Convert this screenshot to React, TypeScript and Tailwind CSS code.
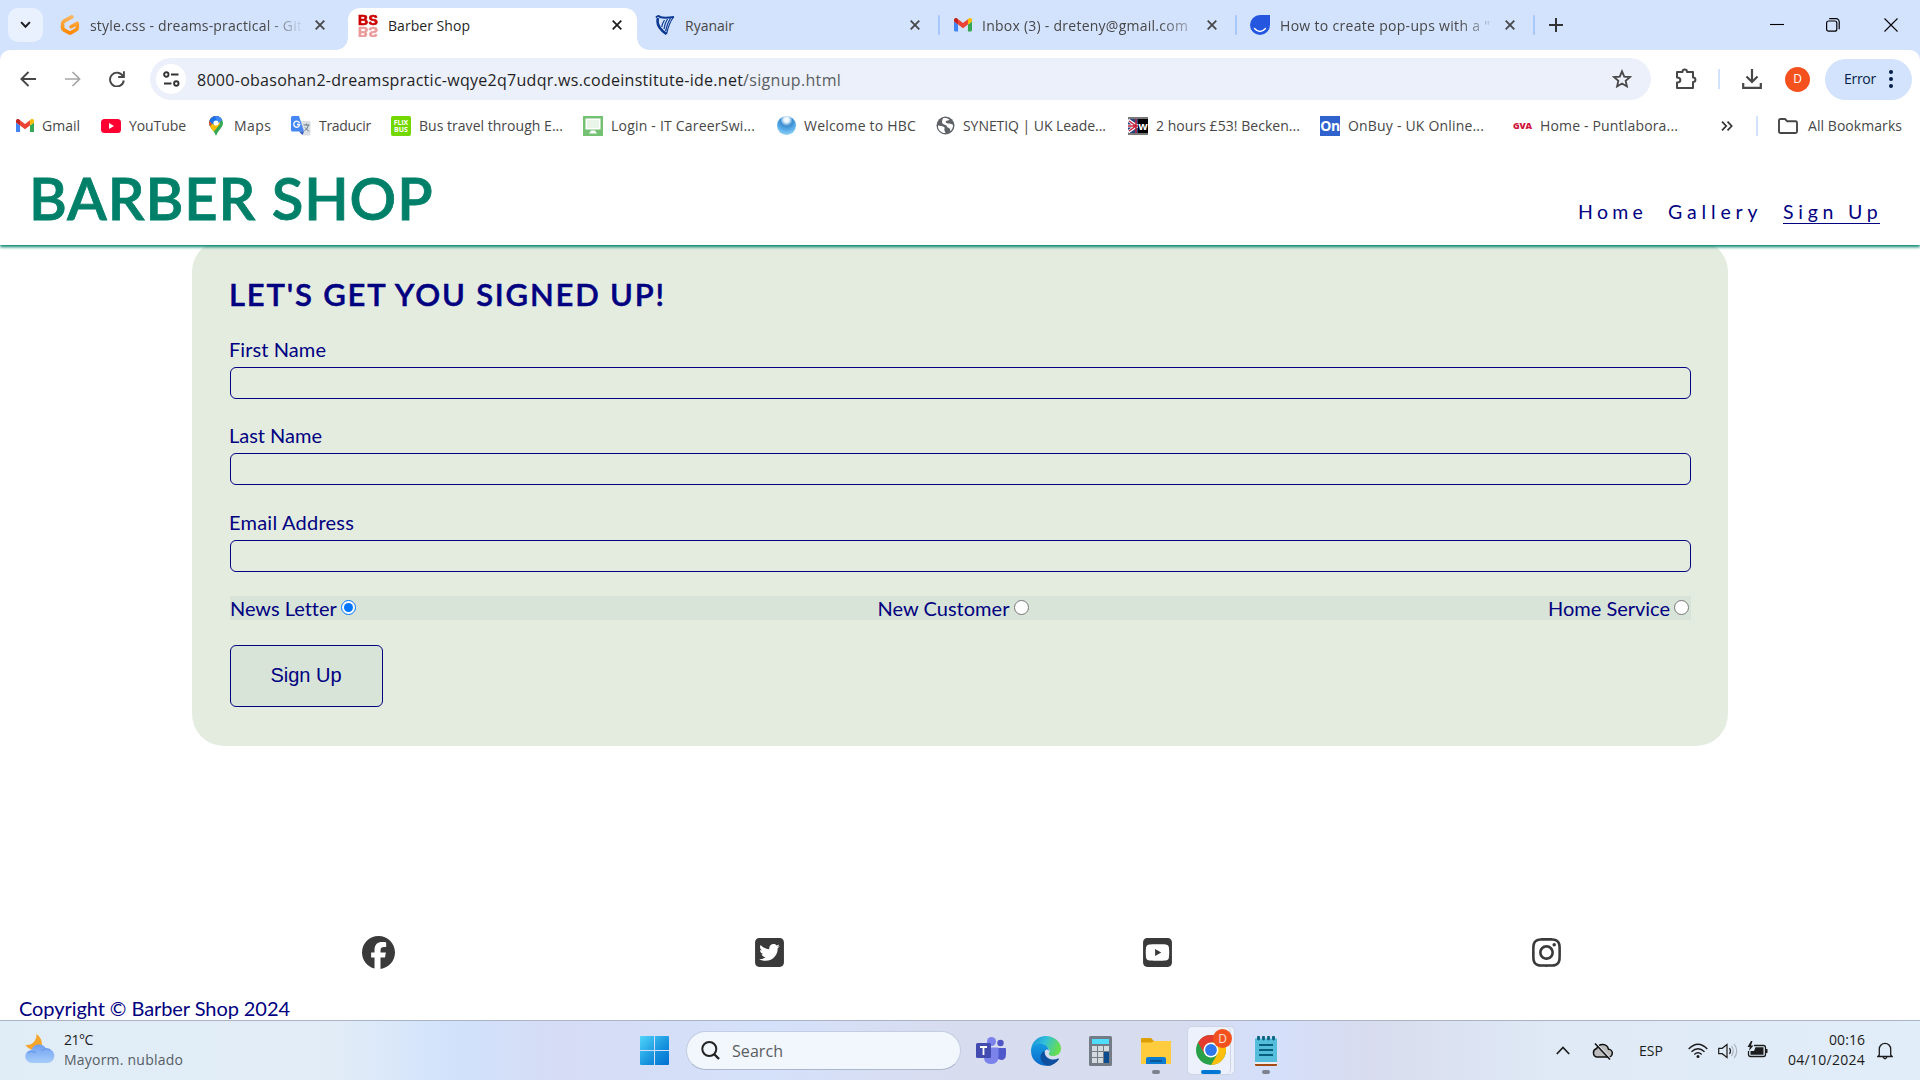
import { useLayoutEffect, useRef, useState, type ReactNode } from 'react';
import { FaFacebook, FaInstagram, FaSquareTwitter, FaSquareYoutube } from 'react-icons/fa6';

/** Single line of text whose tracking is adjusted so that it spans `w` pixels. */
function Fit({ w, className = '', children }: { w: number; className?: string; children: string }) {
  const ref = useRef<HTMLSpanElement>(null);
  const [spacing, setSpacing] = useState(0);
  useLayoutEffect(() => {
    if (ref.current) {
      const natural = ref.current.getBoundingClientRect().width - spacing * children.length;
      setSpacing((w - natural) / (children.length - 0.5));
    }
  }, [w, children]);
  return (
    <span className={`block shrink-0 whitespace-pre ${className}`} style={{ width: w }}>
      <span ref={ref} className="inline-block" style={{ letterSpacing: spacing }}>
        {children}
      </span>
    </span>
  );
}

function CloseX({ className = '' }: { className?: string }) {
  return (
    <svg viewBox="0 0 10 10" className={`size-[10px] shrink-0 ${className}`} stroke="currentColor" strokeWidth="1.8" fill="none">
      <path d="M.7.7l8.6 8.6M9.3.7L.7 9.3" />
    </svg>
  );
}

function GmailIcon({ className = '' }: { className?: string }) {
  return (
    <svg viewBox="0 0 24 18" className={`shrink-0 ${className}`}>
      <path fill="#4285f4" d="M1.6 18h3.8V8.7L0 4.6v11.8C0 17.3.7 18 1.6 18z" />
      <path fill="#34a853" d="M18.6 18h3.8c.9 0 1.6-.7 1.6-1.6V4.6l-5.4 4.1z" />
      <path fill="#fbbc04" d="M18.6 1.6v7.1L24 4.6V2.4c0-2-2.3-3.2-3.9-2z" />
      <path fill="#ea4335" d="M5.4 8.7V1.6L12 6.6l6.6-5v7.1L12 13.7z" />
      <path fill="#c5221f" d="M0 2.4v2.2l5.4 4.1V1.6L3.9.4C2.300-.8 0 .4 0 2.4z" />
    </svg>
  );
}

function GitpodIcon() {
  return (
    <svg viewBox="0 0 20 20" className="size-5 shrink-0">
      <defs>
        <linearGradient id="gp" x1="0" y1="0" x2="0" y2="1">
          <stop offset="0" stopColor="#ffb45b" />
          <stop offset="1" stopColor="#ff8a00" />
        </linearGradient>
      </defs>
      <path d="M11.800 1.900L4.500 5.900Q2.600 7 2.600 8.700v3.900q0 1.500 1.300 2.200l5 2.800q1.100.6 2.200 0l5-2.800q1.200-.7 1.200-2V8.200l-6.300 3.500" fill="none" stroke="url(#gp)" strokeWidth="3.600" strokeLinecap="round" strokeLinejoin="round" />
    </svg>
  );
}

function BarberIcon() {
  return (
    <span className="block h-[22px] w-[21px] shrink-0 pt-px font-['Liberation_Sans'] text-[#cc0000]">
      <span className="block h-[11px] w-[21px] text-[14px] font-bold leading-[11px] tracking-[.3px] [-webkit-box-reflect:below_0px_linear-gradient(rgba(0,0,0,.4),rgba(0,0,0,.4))] [-webkit-text-stroke:.7px_#cc0000]">BS</span>
    </span>
  );
}

function RyanairIcon() {
  return (
    <svg viewBox="0 0 20 20" className="size-5 shrink-0" fill="none" stroke="#0c3a93">
      <path d="M1 2.500q2-2.500 4-.5 4 1.500 14 0" strokeWidth="2" />
      <path d="M3 3Q.5 12 11.500 19" strokeWidth="2.600" />
      <path d="M18.500 2Q14 8 11.500 19M15.500 3Q12 9 10.500 16M12.500 4Q9.500 9 9 14M9.500 5Q7 9 6.800 12" strokeWidth="1.200" />
    </svg>
  );
}

function Separator({ className = '' }: { className?: string }) {
  return <div className={`h-5 w-[2px] shrink-0 rounded bg-[#a8c7fa] ${className}`} />;
}

function TabStrip() {
  return (
    <div className="flex h-[50px] items-center bg-[#d3e2fd] text-[14px] text-[#474747]">
      <div className="ml-2 grid h-[34px] w-[35px] shrink-0 place-items-center rounded-[10px] bg-[#e9f0fe] text-[#1f1f1f]">
        <svg viewBox="0 0 12 8" className="w-[11px]" fill="none" stroke="currentColor" strokeWidth="2.200"><path d="M1.200 1.200L6 6.200l4.800-5" /></svg>
      </div>
      <div className="ml-[17px] flex w-[288px] shrink-0 items-center">
        <GitpodIcon />
        <div className="ml-[10px] w-[212px] overflow-hidden [mask-image:linear-gradient(90deg,#000_83%,transparent_101%)]"><Fit w={212}>style.css - dreams-practical - Git</Fit></div>
        <CloseX className="ml-[13px]" />
      </div>
      <div className="relative flex h-[42px] w-[289px] shrink-0 items-center self-end rounded-t-[12px] bg-white pl-[10px] pb-[8px] text-[#1f1f1f] before:absolute before:-left-3 before:bottom-0 before:size-3 before:bg-[radial-gradient(circle_at_0_0,transparent_11.500px,white_12px)] after:absolute after:-right-3 after:bottom-0 after:size-3 after:bg-[radial-gradient(circle_at_100%_0,transparent_11.500px,white_12px)]">
        <BarberIcon />
        <Fit w={82} className="ml-[9px]">Barber Shop</Fit>
        <CloseX className="ml-[142px]" />
      </div>
      <div className="ml-[18px] flex w-[283px] shrink-0 items-center">
        <RyanairIcon />
        <Fit w={49} className="ml-[10px]">Ryanair</Fit>
        <CloseX className="ml-[176px]" />
        <Separator className="ml-[18px]" />
      </div>
      <div className="ml-[16px] flex w-[283px] shrink-0 items-center">
        <GmailIcon className="w-[18px]" />
        <div className="ml-[10px] w-[206px] overflow-hidden [mask-image:linear-gradient(90deg,#000_86%,transparent_108%)]"><Fit w={206}>Inbox (3) - dreteny@gmail.com</Fit></div>
        <CloseX className="ml-[19px]" />
        <Separator className="ml-[18px]" />
      </div>
      <div className="ml-[13px] flex w-[285px] shrink-0 items-center">
        <svg viewBox="0 0 20 20" className="size-5 shrink-0">
          <path d="M10 0h10v10A10 10 0 1 1 10 0z" fill="#2456df" />
          <path d="M4.500 13.500q5.500 6 11 0" fill="none" stroke="#fff" strokeWidth="1.400" strokeLinecap="round" />
        </svg>
        <div className="ml-[10px] w-[210px] overflow-hidden [mask-image:linear-gradient(90deg,#000_85%,transparent_104%)]"><Fit w={210}>How to create pop-ups with a "</Fit></div>
        <CloseX className="ml-[15px]" />
        <Separator className="ml-[18px]" />
      </div>
      <svg viewBox="0 0 14 14" className="ml-[14px] size-[14px] shrink-0" stroke="#333" strokeWidth="2"><path d="M7 0v14M0 7h14" /></svg>
      <div className="ml-auto mr-[22px] flex items-center text-black">
        <svg viewBox="0 0 14 14" className="size-[14px]" stroke="currentColor" strokeWidth="1.100"><path d="M0 6.500h14" /></svg>
        <svg viewBox="0 0 14 14" className="ml-[42px] size-[14px]" fill="none" stroke="currentColor" strokeWidth="1.200"><rect x=".6" y="3" width="10.200" height="10.200" rx="2" /><path d="M3.200.7h7a3 3 0 0 1 3 3v7.500" /></svg>
        <svg viewBox="0 0 14 14" className="ml-[44px] size-[14px]" fill="none" stroke="currentColor" strokeWidth="1.100"><path d="M.5.5l13 13M13.500.5l-13 13" /></svg>
      </div>
    </div>
  );
}

function Toolbar() {
  return (
    <div className="bg-[#d3e2fd]">
      <div className="flex h-[58px] items-center rounded-t-[10px] bg-white pl-5 text-[#474747]">
        <svg viewBox="0 0 16 16" className="size-4 shrink-0" fill="none" stroke="currentColor" strokeWidth="1.900"><path d="M16 8H1.500M8.500 1L1.400 8l7.100 7" /></svg>
        <svg viewBox="0 0 16 16" className="ml-[29px] size-4 shrink-0 text-[#a6a6a6]" fill="none" stroke="currentColor" strokeWidth="1.700"><path d="M0 8h14.500M7.500 1l7.100 7-7.100 7" /></svg>
        <svg viewBox="0 0 16 16" className="ml-[28px] size-4 shrink-0" fill="none" stroke="currentColor" strokeWidth="1.900"><path d="M14 5.200A6.900 6.900 0 1 0 14.800 9.500" /><path d="M14.900.3V6H9.200" /></svg>
        <div className="ml-[25px] flex h-[42px] w-[1501px] shrink-0 items-center rounded-full bg-[#ecf0fa] pl-[6px]">
          <div className="grid size-[30px] shrink-0 place-items-center rounded-full bg-white">
            <svg viewBox="0 0 17 16" className="h-4 w-[17px]" fill="none" stroke="#333" strokeWidth="1.900"><circle cx="3.300" cy="3.500" r="2.200" /><path d="M8 3.500h7.500M1 12.500h7.500" /><circle cx="13.300" cy="12.500" r="2.200" /></svg>
          </div>
          <div className="ml-[11px] flex pt-px text-[16px] text-[#1f1f1f]">
            <Fit w={546}>8000-obasohan2-dreamspractic-wqye2q7udqr.ws.codeinstitute-ide.net</Fit>
            <Fit w={98} className="text-[#5a5d61]">/signup.html</Fit>
          </div>
          <svg viewBox="0 0 24 24" className="ml-auto mr-[19px] size-[20px]" fill="none" stroke="currentColor" strokeWidth="2.200"><path d="M12 2.800l2.700 6.300 6.800.6-5.100 4.500 1.500 6.700-5.900-3.500-5.900 3.500 1.500-6.700-5.100-4.500 6.800-.6z" /></svg>
        </div>
        <svg viewBox="0 0 22 22" className="ml-[24px] size-[22px] shrink-0" fill="none" stroke="currentColor" strokeWidth="2"><path d="M2 4h5.500c0-3.200 4.500-3.200 4.500 0h6v5.500c3.200 0 3.200 4.500 0 4.500v6H2v-5.500c4.500 0 4.500-5 0-5z" strokeLinejoin="round" /></svg>
        <div className="ml-[21px] h-5 w-[2px] shrink-0 bg-[#d3e3fd]" />
        <svg viewBox="0 0 20 20" className="ml-[22px] size-[20px] shrink-0" fill="none" stroke="currentColor" strokeWidth="2.200"><path d="M10 0v12.500M4.500 7.500l5.500 5.500 5.500-5.500M1.200 14v4.800h17.600V14" /></svg>
        <div className="ml-[23px] grid size-[25px] shrink-0 place-items-center rounded-full bg-[#f4511e] text-[12px] text-white">D</div>
        <div className="ml-[15px] flex h-[41px] w-[87px] shrink-0 items-center rounded-full bg-[#d3e3fd] pb-px pl-[19px] text-[14px] text-[#041e49]">
          <Fit w={32}>Error</Fit>
          <svg viewBox="0 0 4 18" className="ml-[13px] h-[18px] w-1" fill="currentColor"><circle cx="2" cy="2" r="2" /><circle cx="2" cy="9" r="2" /><circle cx="2" cy="16" r="2" /></svg>
        </div>
      </div>
    </div>
  );
}

function Bookmark({ icon, w, className = '', children }: { icon: ReactNode; w: number; className?: string; children: string }) {
  return (
    <div className={`flex shrink-0 items-center ${className}`}>
      {icon}
      <Fit w={w} className="ml-2">{children}</Fit>
    </div>
  );
}

function BookmarksBar() {
  return (
    <div className="flex h-[42px] shrink-0 items-center bg-white pb-[7px] pl-4 text-[14px] text-[#474747]">
      <Bookmark w={38} icon={<GmailIcon className="w-[18px]" />}>Gmail</Bookmark>
      <Bookmark w={57} className="ml-[21px]" icon={<svg viewBox="0 0 20 14" className="h-[14px] w-5"><rect width="20" height="14" rx="3.500" fill="#f03" /><path d="M8 4l5 3-5 3z" fill="#fff" /></svg>}>YouTube</Bookmark>
      <Bookmark w={37} className="ml-[20px]" icon={
        <svg viewBox="0 0 20 20" className="size-5">
          <defs><clipPath id="pin"><path d="M10 0a7 7 0 0 1 7 7c0 4.500-5 7-7 13-2-6-7-8.500-7-13a7 7 0 0 1 7-7z" /></clipPath></defs>
          <g clipPath="url(#pin)"><path fill="#34a853" d="M0 0h20v20H0z" /><path fill="#fbbc04" d="M0 14L14 0v8L5 19z" /><path fill="#ea4335" d="M0 0h9L4 11H0z" /><path fill="#1a73e8" d="M5 0h10v4l-7 5-5-4z" /><path fill="#4285f4" d="M9 0h11l-8 8z" /></g>
          <circle cx="10" cy="7" r="2.600" fill="#fff" />
        </svg>}>Maps</Bookmark>
      <Bookmark w={52} className="ml-[20px]" icon={
        <svg viewBox="0 0 20 20" className="size-5"><path d="M8 5h10.500q1 0 1 1v12.500q0 1-1 1H12z" fill="#dcdfe3" /><path d="M1.500 0H8l5 15.500H1.500q-1.500 0-1.500-1.500V1.500Q0 0 1.500 0z" fill="#4587f4" /><path d="M8 15.500h5L11.500 19z" fill="#3457b8" /><path d="M9.500 7.600A3 3 0 1 0 9.700 9H7" fill="none" stroke="#fff" strokeWidth="1.300" transform="translate(-1 -.5)" /><path d="M12.500 9h6M15.500 7.500V9M17.500 9q-1 4-4 6M14 11.500l4 4" stroke="#607988" fill="none" /></svg>}>Traducir</Bookmark>
      <Bookmark w={144} className="ml-[20px]" icon={
        <span className="flex size-5 flex-col items-center justify-center rounded-[2px] bg-[#73d700] text-[7px] font-bold leading-[7px] text-white"><span>FLiX</span><span>BUS</span></span>}>Bus travel through E...</Bookmark>
      <Bookmark w={144} className="ml-[20px]" icon={
        <svg viewBox="0 0 20 20" className="size-5"><path d="M0 0h20v20H0z" fill="#74c174" /><path d="M2.500 2.500h15v11h-15z" fill="#fff" /><path d="M4 4h12v8H4z" fill="#eaf5ea" /><path d="M8 14.500h4l2 3H6z" fill="#fff" /></svg>}>Login - IT CareerSwi...</Bookmark>
      <Bookmark w={112} className="ml-[22px]" icon={
        <span className="size-[19px] shrink-0 rounded-full bg-[radial-gradient(circle_at_50%_20%,#ffffff_0,#e3f2fd_15%,#3d8ed0_35%,#5db0ea_60%,#b5e3fc_100%)]" />}>Welcome to HBC</Bookmark>
      <Bookmark w={143} className="ml-[20px]" icon={
        <svg viewBox="0 0 19 19" className="size-[19px]"><circle cx="9.500" cy="9.500" r="9" fill="#5f6368" /><path d="M2 9.500c2 .2 4 .5 5.500 1.200 2 .9.500 2.200 1 3.800.2 1 .6 1.800 1.200 2.600C5 17.200 1.500 13.500 2 9.500zM7 2.300c2.500-.7 5 0 6.500 1.200-.8 1.600-2.500.6-3.500 1.600-1 1.200.5 2.400 2.200 2.400 2 0 3.500.5 4.800 1.500.2 2.500-1 5-2.600 6.300-.4-1.500-.2-3.300-2-3.500-1.800-.3-1.200-2.300-2.800-2.800C7.500 8.300 5.600 7.600 6 5.500c.2-1.200.6-2 1-3.200z" fill="#fff" /></svg>}>SYNETIQ | UK Leade...</Bookmark>
      <Bookmark w={144} className="ml-[22px]" icon={
        <span className="flex h-[18px] w-5 shrink-0 border-y-2 border-[#777]">
          <svg viewBox="0 0 10 14" className="h-[14px] w-[10px]"><path d="M0 0h10v14H0z" fill="#28457e" /><path d="M0 1l10 7M0 13l10-7M0 7h10" fill="none" stroke="#fff" strokeWidth="3.200" /><path d="M0 7h10M8 0v14M1 2l7 5M1 12l7-5" fill="none" stroke="#c8203a" strokeWidth="1.500" /></svg>
          <span className="w-[10px] bg-black text-center text-[11px] font-bold leading-[13px] text-white">w</span>
        </span>}>2 hours £53! Becken...</Bookmark>
      <Bookmark w={136} className="ml-[20px]" icon={
        <span className="grid size-5 shrink-0 place-items-center bg-[#2f62cd] text-[14px] font-bold leading-none tracking-tight text-white">On</span>}>OnBuy - UK Online...</Bookmark>
      <Bookmark w={138} className="ml-[29px]" icon={
        <span className="w-[19px] shrink-0 text-[9px] font-extrabold leading-none tracking-tight text-[#d0163c]">GVA</span>}>Home - Puntlabora...</Bookmark>
      <svg viewBox="0 0 12 10" className="ml-[43px] h-[10px] w-3 shrink-0" fill="none" stroke="#333" strokeWidth="1.700"><path d="M1 .7L5.200 5 1 9.300M6.500.7L10.700 5 6.500 9.300" /></svg>
      <div className="ml-[23px] h-5 w-[2px] shrink-0 bg-[#d3e3fd]" />
      <svg viewBox="0 0 20 16" className="ml-[20px] h-4 w-5 shrink-0" fill="none" stroke="currentColor" strokeWidth="1.900"><path d="M1 2.500Q1 1 2.500 1H7l2.200 2.200h8.300Q19 3.200 19 4.700v8.800q0 1.500-1.500 1.500h-15Q1 15 1 13.500z" /></svg>
      <Fit w={94} className="ml-[10px]">All Bookmarks</Fit>
    </div>
  );
}

function Field({ label, w }: { label: string; w: number }) {
  return (
    <label className="mb-[24.250px] flex flex-col gap-[6px]">
      <Fit w={w} className="-ml-px leading-6">{label}</Fit>
      <input type="text" className="h-8 rounded-[6px] border border-[#000080] bg-transparent" />
    </label>
  );
}

function RadioOption({ label, w, checked = false }: { label: string; w: number; checked?: boolean }) {
  return (
    <label className="flex items-center">
      <Fit w={w} className="leading-6">{label}</Fit>
      {checked ? (
        <span className="mb-[1px] ml-[5px] mr-[4px] grid size-[15px] place-items-center rounded-full border-[1.500px] border-[#0075ff] bg-white"><span className="size-[9px] rounded-full bg-[#0075ff]" /></span>
      ) : (
        <span className="mb-[1px] ml-[4px] mr-[2px] size-[15px] rounded-full border border-[#767676] bg-white" />
      )}
    </label>
  );
}

function Website() {
  return (
    <div className="flex h-[870px] flex-col overflow-hidden bg-white font-['Lato',sans-serif] text-[20px] text-[#000080]">
      <header className="relative z-10 flex h-[95px] shrink-0 bg-white shadow-[0_2px_3px_#008069]">
        <h1 className="ml-[29px] mt-[13px] text-[58px] font-semibold leading-[70px] text-[#008069] [-webkit-text-stroke:.8px_#008069]"><Fit w={404}>BARBER SHOP</Fit></h1>
        <nav className="ml-auto mr-[40px] mt-[49px] flex text-[19.500px] leading-[25px]">
          <Fit w={67}>Home</Fit>
          <Fit w={92} className="ml-[23px]">Gallery</Fit>
          <Fit w={97} className="ml-[23px] h-[25px] border-b border-[#000080]">Sign Up</Fit>
        </nav>
      </header>
      <form className="mx-[192px] -mt-[5px] flex h-[506px] flex-col rounded-[32px] bg-[#e4ece0] px-[37px] pt-[34px]">
        <div className="ml-px flex flex-col">
          <h2 className="-ml-px mb-[23px] text-[31px] font-semibold leading-10 [-webkit-text-stroke:.5px_#000080]"><Fit w={436}>LET'S GET YOU SIGNED UP!</Fit></h2>
          <Field label="First Name" w={97} />
          <Field label="Last Name" w={93} />
          <Field label="Email Address" w={125} />
          <div className="flex h-6 items-center justify-between bg-[#d8e4d8]">
            <RadioOption label="News Letter" w={106} checked />
            <RadioOption label="New Customer" w={132} />
            <RadioOption label="Home Service" w={122} />
          </div>
          <button type="button" className="mt-[25px] flex h-[62px] w-[153px] items-center justify-center rounded-[6px] border border-[#000080] bg-[#d8e4d8] pb-[2px] pr-px font-['Liberation_Sans']"><Fit w={71}>Sign Up</Fit></button>
        </div>
      </form>
      <footer className="mt-[190px]">
        <div className="flex h-[34px] items-center pb-px text-[#3a3a3a]">
          <FaFacebook className="ml-[362px] size-[33px]" />
          <FaSquareTwitter className="ml-[358px] size-[33px]" />
          <FaSquareYoutube className="ml-[355px] size-[33px]" />
          <FaInstagram className="ml-[356px] size-[33px]" />
        </div>
        <p className="ml-[19px] mt-[26px] leading-6"><Fit w={271}>Copyright © Barber Shop 2024</Fit></p>
      </footer>
    </div>
  );
}

function Taskbar() {
  return (
    <div className="flex h-[60px] items-center border-t border-[#a9b3c4] bg-[linear-gradient(90deg,#e1edf6_0px,#e1ecf7_340px,#d1e2fb_450px,#d6dcf5_560px,#d5e1fa_770px,#d8dcef_960px,#d7dcef_1180px,#d4dffa_1270px,#d8dcee_1370px,#dfeaf6_1560px,#e1edf8_1920px)] text-[14px] text-[#1c1c1c]">
      <svg viewBox="0 0 30 30" className="mb-[3px] ml-[25px] size-[30px] shrink-0">
        <defs><linearGradient id="cl" x1="0" y1="0" x2="0" y2="1"><stop offset="0" stopColor="#6f9ff0" /><stop offset="1" stopColor="#a6cdfa" /></linearGradient></defs>
        <path d="M11.500 0q6 4 5.500 12l-9 4q-5-1-7.500-5 5 .5 8-2.500t3-8.500z" fill="#f5a52b" />
        <path d="M7 29a6.500 6.500 0 0 1-.5-13 8 8 0 0 1 14.500-1.500A7.300 7.300 0 1 1 23 29z" fill="url(#cl)" />
        <path d="M3 19q3-3 8-.5M16 17q5-4 9-1" fill="none" stroke="#5f8fe6" strokeWidth=".9" />
      </svg>
      <div className="ml-[9px] flex w-[120px] shrink-0 flex-col pb-[2px] leading-5">
        <Fit w={29}>21°C</Fit>
        <Fit w={119} className="text-[#565d66]">Mayorm. nublado</Fit>
      </div>
      <svg viewBox="0 0 29 29" className="ml-[456px] size-[29px] shrink-0">
        <defs><linearGradient id="wn" x1="0" y1="0" x2="1" y2="1"><stop offset="0" stopColor="#4fd5fb" /><stop offset=".6" stopColor="#1690dd" /><stop offset="1" stopColor="#006fcf" /></linearGradient></defs>
        <path d="M1 0h13v14H0V1q0-1 1-1zM15 0h13q1 0 1 1v13H15zM0 15h14v14H1q-1 0-1-1zM15 15h14v13q0 1-1 1H15z" fill="url(#wn)" />
      </svg>
      <div className="ml-[17px] flex h-[39px] w-[275px] shrink-0 items-center rounded-full border border-[#c3cee2] border-b-[#adb7cb] bg-[#f2f6fd] pl-[14px] text-[16px] text-[#5a5d62]">
        <svg viewBox="0 0 19 19" className="size-[19px]" fill="none" stroke="#222" strokeWidth="2"><circle cx="8.300" cy="8" r="7" /><path d="M13 13l5 5" strokeWidth="2.400" /></svg>
        <Fit w={51} className="ml-[12px]">Search</Fit>
      </div>
      <svg viewBox="0 0 30 28" className="ml-[15px] h-7 w-[30px] shrink-0">
        <circle cx="24.500" cy="6" r="3.200" fill="#4f55c4" /><circle cx="15.500" cy="4.500" r="4.500" fill="#7b83eb" />
        <path d="M20 11h9q1 0 1 1v5q0 6-5 6-3 0-5-3z" fill="#5059c9" /><path d="M8 10.500h14.500V19q0 8-7 8t-7.500-6z" fill="#7b83eb" />
        <rect y="6" width="15" height="15" rx="1.500" fill="#444bb0" /><path d="M4 10h7M7.500 10v8" stroke="#fff" strokeWidth="1.800" />
      </svg>
      <svg viewBox="0 0 30 30" className="ml-[25px] size-[30px] shrink-0">
        <defs>
          <linearGradient id="e1" x1="0" y1="0" x2="1" y2=".3"><stop offset="0" stopColor="#168bd5" /><stop offset=".5" stopColor="#32bfdc" /><stop offset="1" stopColor="#66dd52" /></linearGradient>
          <linearGradient id="e2" x1="0" y1="0" x2="0" y2="1"><stop offset="0" stopColor="#159be2" /><stop offset="1" stopColor="#0869c9" /></linearGradient>
        </defs>
        <path d="M0 15C0 6 7 0 15 0s15 6 15 12.500c0 5-4 7.500-8 7.500-3 0-5-1-4-3 2-3-1-6-4-6C8 11 3 12 0 15z" fill="url(#e1)" />
        <path d="M0 15C1 9 7 7 11 8c4 1 7 4 7 7-1-2-3-2-4 0-2 4 1 10 6 14-9 3-20-3-20-14z" fill="url(#e2)" />
        <path d="M13.500 15c-7 3-4 14 4 14.800 4-.3 8-3 10.500-6.600.3-.6-.2-.8-.7-.6-7 3-14-1-13.800-7.600z" fill="#0f4f9f" />
      </svg>
      <svg viewBox="0 0 23 30" className="ml-[28px] h-[30px] w-[23px] shrink-0">
        <rect width="23" height="30" rx="1.500" fill="#727b86" /><path d="M3 3h17v5H3z" fill="#50dcfb" />
        <path d="M3 10h5v5H3zM9 10h5v5H9zM15 10h5v5h-5zM3 16h5v5H3zM9 16h5v5H9zM3 22h5v5H3zM9 22h5v5H9z" fill="#d5dade" /><path d="M15 16h5v11h-5z" fill="#0a4c8d" />
      </svg>
      <div className="ml-[29px] flex h-12 w-[30px] shrink-0 flex-col items-center pt-[11px]">
        <svg viewBox="0 0 30 26" className="h-[26px] w-[30px] shrink-0"><path d="M0 8V1q0-1 1-1h9l3 3h16v5z" fill="#dca005" /><path d="M0 4.500h11l2-1.500h16q1 0 1 1v22H0z" fill="#ffcc3d" /><path d="M5 26v-5q0-2 2-2h16q2 0 2 2v5z" fill="#0c7bd0" /><path d="M9 23h12" stroke="#06447c" strokeWidth="1.300" /></svg>
        <span className="mt-[6px] h-1 w-2 rounded-full bg-[#7d828e]" />
      </div>
      <div className="ml-[16px] flex h-[49px] w-[48px] shrink-0 rounded-[5px] border border-[#cdd4e6] bg-[#edf1fb]">
        <div className="relative flex w-[43px] flex-col rounded-[5px] border-r border-[#cdd4e6] pl-[8px] pt-[8px]">
          <svg viewBox="0 0 30 30" className="size-[30px] shrink-0">
            <circle cx="15" cy="15" r="15" fill="#28a148" />
            <path d="M15 7.500h13A15 15 0 0 0 2 7.500L8.500 18.800z" fill="#e33b2e" />
            <path d="M15 30A15 15 0 0 0 28 7.500H15l6.500 11.300z" fill="#fcbf0b" />
            <circle cx="15" cy="15" r="7.500" fill="#fff" /><circle cx="15" cy="15" r="5.900" fill="#2e77ed" />
          </svg>
          <span className="absolute left-[25px] top-[2px] grid size-[19px] place-items-center rounded-full bg-[#f4511e] text-[12px] leading-none text-white/80">D</span>
          <span className="ml-[5px] mt-[5px] h-1 w-5 rounded-full bg-[#0078d4]" />
        </div>
      </div>
      <div className="ml-[20px] flex h-12 w-[22px] shrink-0 flex-col items-center pt-[9px]">
        <svg viewBox="0 0 22 30" className="h-[30px] w-[22px] shrink-0"><path d="M0 2.500h22v24H0z" fill="#53bddb" /><path d="M0 26h22v2H0z" fill="#eee" /><path d="M0 28h22v1q0 1-1 1H1q-1 0-1-1z" fill="#a44a14" /><path d="M4 9h14M4 14h14M4 19h14" stroke="#08607f" strokeWidth="1.900" /><path d="M3.500 1v2M8.500 1v2M13.500 1v2M18.500 1v2" stroke="#08607f" strokeWidth="2.800" strokeLinecap="round" /></svg>
        <span className="mt-[4px] h-1 w-2 rounded-full bg-[#7d828e]" />
      </div>
      <div className="ml-auto flex shrink-0 items-center">
        <svg viewBox="0 0 14 9" className="h-[9px] w-[14px]" fill="none" stroke="currentColor" strokeWidth="1.700"><path d="M.8 8L7 1.500 13.200 8" /></svg>
        <svg viewBox="0 0 21 18" className="ml-[22px] h-[18px] w-[21px]" fill="none" stroke="#111" strokeWidth="1.500"><path d="M5 15a4.300 4.300 0 0 1-.3-8.400 6.200 6.200 0 0 1 11.800.6A3.900 3.900 0 0 1 16.300 15z" fill="#bcbcbc" /><path d="M4.200 1.500l15 16" stroke="#e8eef5" strokeWidth="1.500" /><path d="M3 1.500l15 16" /></svg>
        <Fit w={24} className="ml-[26px] pb-px">ESP</Fit>
        <svg viewBox="0 0 20 16" className="ml-[25px] h-4 w-5" fill="none" stroke="currentColor" strokeWidth="1.400"><path d="M.7 6Q10-3.500 19.300 6M3.500 8.800q6.500-6 13 0M6.300 11.500q3.700-3.300 7.400 0" /><circle cx="10" cy="13.500" r="1.500" fill="currentColor" stroke="none" /></svg>
        <svg viewBox="0 0 20 16" className="ml-[10px] h-4 w-5" fill="none" stroke="currentColor" strokeWidth="1.200"><path d="M.7 5.300h3.500L9 1.500v13L4.200 10.700H.7zM11.500 5q2 3 0 6" /><path d="M13.500 3q3.500 5 0 10M16.200 1q5 7 0 14" stroke="#a9b2bb" /></svg>
        <svg viewBox="0 0 21 17" className="mb-[2px] ml-[9px] h-[17px] w-[21px]"><path d="M7 4.500h9.500q2 0 2 2v7q0 2-2 2h-13q-2 0-2-2V10" fill="none" stroke="currentColor" strokeWidth="1.300" /><path d="M8.500 6.300h8v7.500h-13V10H7zM19 8h1.500v4H19zM4 0L.5 6h2.300L2 10l4.500-5.500H4L5.500 0z" fill="currentColor" /></svg>
        <div className="ml-[20px] flex w-[77px] flex-col items-end pb-[2px] leading-5">
          <Fit w={36}>00:16</Fit>
          <Fit w={77}>04/10/2024</Fit>
        </div>
        <svg viewBox="0 0 16 18" className="ml-[12px] mr-[27px] h-[18px] w-4" fill="none" stroke="currentColor" strokeWidth="1.300"><path d="M2.300 13V7a5.700 5.700 0 0 1 11.400 0v6l1.500 1.500H.8zM6 15q2 3.500 4 0" /></svg>
      </div>
    </div>
  );
}

export default function App() {
  return (
    <div className="flex h-[1080px] w-[1920px] flex-col overflow-hidden bg-white font-['Open_Sans','Noto_Sans',sans-serif]">
      <TabStrip />
      <Toolbar />
      <BookmarksBar />
      <Website />
      <Taskbar />
    </div>
  );
}
